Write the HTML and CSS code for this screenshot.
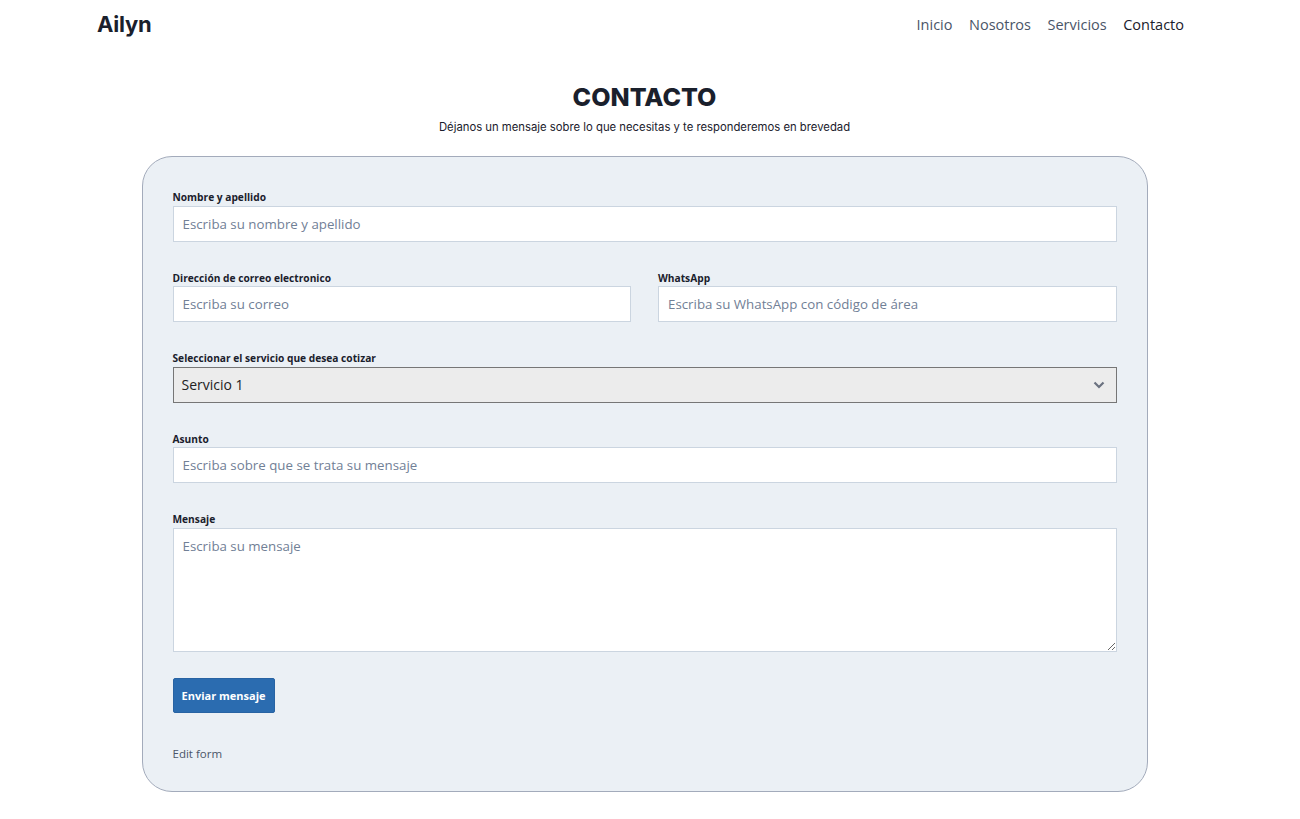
FILE: index.html
```html
<!DOCTYPE html>
<html lang="es">
<head>
<meta charset="utf-8">
<title>Contacto - Ailyn</title>
<link rel="stylesheet" href="styles.css">
</head>
<body>
<header class="topbar">
  <a class="brand" href="#">Ailyn</a>
  <nav class="nav">
    <a href="#">Inicio</a>
    <a href="#">Nosotros</a>
    <a href="#">Servicios</a>
    <a href="#" class="active">Contacto</a>
  </nav>
</header>
<main class="page">
  <h1 class="title">CONTACTO</h1>
  <p class="subtitle">Déjanos un mensaje sobre lo que necesitas y te responderemos en brevedad</p>
  <form class="card">
    <div class="field">
      <label>Nombre y apellido</label>
      <input type="text" placeholder="Escriba su nombre y apellido">
    </div>
    <div class="row">
      <div class="field">
        <label>Dirección de correo electronico</label>
        <input type="text" placeholder="Escriba su correo">
      </div>
      <div class="field">
        <label>WhatsApp</label>
        <input type="text" placeholder="Escriba su WhatsApp con código de área">
      </div>
    </div>
    <div class="field">
      <label>Seleccionar el servicio que desea cotizar</label>
      <div class="select">
        <span>Servicio 1</span>
        <svg width="12" height="8" viewBox="0 0 12 8"><path d="M1.5 1.5 L6 6 L10.5 1.5" fill="none" stroke="#6b7280" stroke-width="2.2"/></svg>
      </div>
    </div>
    <div class="field">
      <label>Asunto</label>
      <input type="text" placeholder="Escriba sobre que se trata su mensaje">
    </div>
    <div class="field">
      <label>Mensaje</label>
      <textarea placeholder="Escriba su mensaje"></textarea>
    </div>
    <button type="button" class="btn">Enviar mensaje</button>
    <a class="edit" href="#">Edit form</a>
  </form>
</main>
</body>
</html>
```
FILE: styles.css
```css
* { box-sizing: border-box; }
body {
  margin: 0;
  background: #ffffff;
  font-family: "Open Sans", "Noto Sans", sans-serif;
  color: #1a202c;
}
.topbar {
  display: flex;
  justify-content: space-between;
  align-items: center;
  height: 48px;
  padding: 0 116px 0 97px;
}
.brand {
  font-family: "Inter", sans-serif;
  font-weight: 700;
  font-size: 22px;
  color: #1a202c;
  text-decoration: none;
  letter-spacing: -0.2px;
}
.nav { display: flex; gap: 16.5px; }
.nav a {
  font-size: 14.5px;
  color: #4a5568;
  text-decoration: none;
}
.nav a.active { color: #1a202c; }
.page {
  display: flex;
  flex-direction: column;
  align-items: center;
  padding-right: 11px;
}
.title {
  font-family: "Inter", sans-serif;
  font-weight: 800;
  font-size: 25px;
  margin: 34px 0 0;
  line-height: 30px;
  color: #1a202c;
}
.subtitle {
  font-family: "Inter", sans-serif;
  font-size: 11.3px;
  margin: 7px 0 0;
  line-height: 16px;
  color: #1a202c;
}
.card {
  width: 1006px;
  margin: 21px 0 27px;
  background: #ebf0f5;
  border: 1px solid #a3abbb;
  border-radius: 30px;
  padding: 33px 30px 30px;
  display: flex;
  flex-direction: column;
  align-items: flex-start;
}
.field {
  display: flex;
  flex-direction: column;
  width: 100%;
  margin-bottom: 29px;
}
.row {
  display: grid;
  grid-template-columns: 1fr 1fr;
  gap: 27px;
  width: 100%;
}
label {
  font-size: 10.2px;
  font-weight: 700;
  color: #1a202c;
  line-height: 14px;
  margin-bottom: 1.5px;
}
input, textarea, .select {
  font-family: "Open Sans", "Noto Sans", sans-serif;
  font-size: 13.3px;
  width: 100%;
  height: 36px;
  border: 1px solid #cbd5e0;
  background: #fff;
  padding: 0 9px;
  color: #1a202c;
  border-radius: 0;
  outline: none;
}
input::placeholder, textarea::placeholder { color: #718096; }
textarea {
  height: 124px;
  padding: 8px 9px;
  resize: vertical;
}
.select {
  display: flex;
  align-items: center;
  justify-content: space-between;
  background: #ececec;
  border-color: #767676;
  padding: 0 11px 0 8px;
  font-size: 14px;
  color: #222;
}
.btn {
  margin-top: -3px;
  font-family: "Open Sans", "Noto Sans", sans-serif;
  background: #2b6cb0;
  color: #fff;
  border: 1px solid #2863a3;
  border-radius: 2px;
  font-weight: 700;
  font-size: 11px;
  height: 35px;
  padding: 0 8px;
}
.edit {
  margin-top: 33px;
  font-size: 11.5px;
  color: #4a5568;
  text-decoration: none;
}
```
